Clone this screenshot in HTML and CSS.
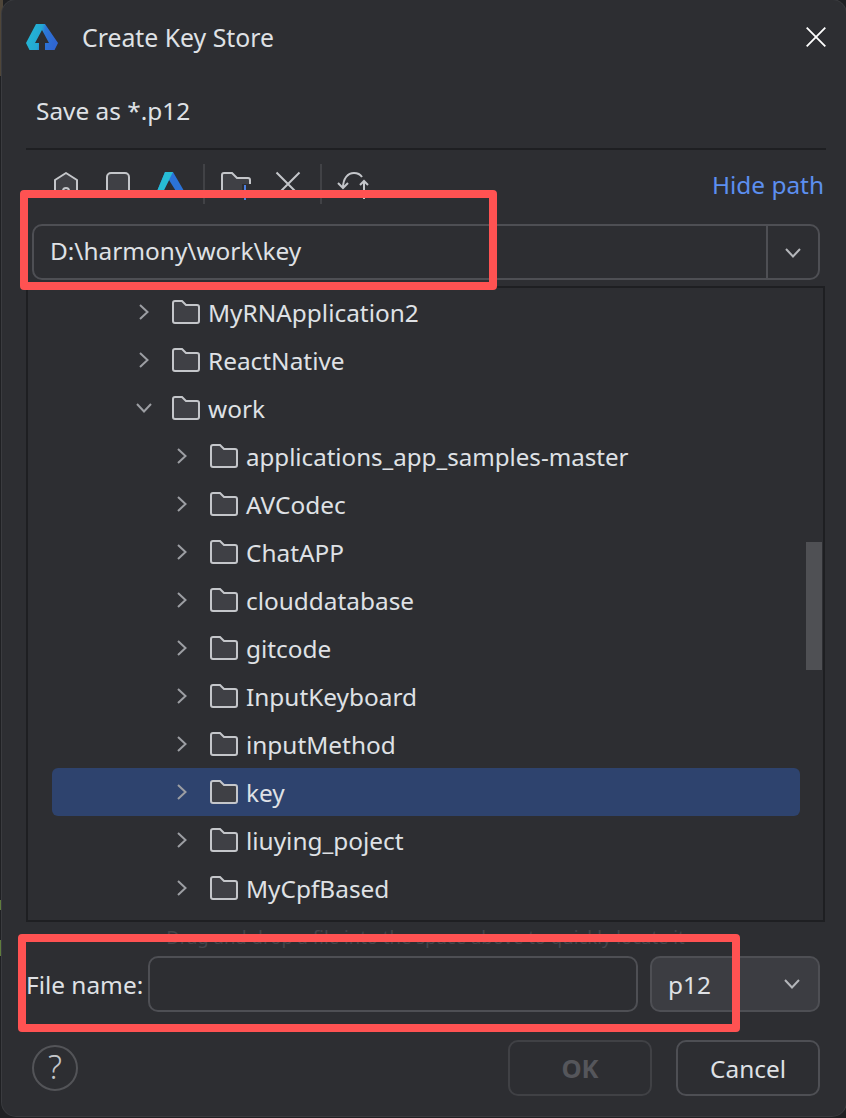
FILE: index.html
```html
<!DOCTYPE html>
<html lang="en">
<head>
<meta charset="utf-8">
<title>Create Key Store</title>
<link rel="stylesheet" href="styles.css">
</head>
<body>
<svg class="defs" width="0" height="0" aria-hidden="true">
  <defs>
    <linearGradient id="lg1" x1="0" y1="0" x2="1" y2="0.2"><stop offset="0" stop-color="#24b9d4"/><stop offset="0.5" stop-color="#23a8d3"/><stop offset="0.62" stop-color="#2c78d8"/><stop offset="1" stop-color="#2f66d2"/></linearGradient>
    <symbol id="i-right" viewBox="0 0 10 16"><path d="M1 1l7.500 7L1 15"/></symbol>
    <symbol id="i-down" viewBox="0 0 16 10"><path d="M1 1l7 7.500L15 1"/></symbol>
    <symbol id="i-folder" viewBox="0 0 28 24"><path d="M1 3a2 2 0 0 1 2-2h7l4 4h11a2 2 0 0 1 2 2v14a2 2 0 0 1-2 2H3a2 2 0 0 1-2-2z"/></symbol>
  </defs>
</svg>
<main class="dialog">
  <header class="titlebar">
    <svg class="logo" viewBox="0 0 32 26"><path fill-rule="evenodd" d="M10 0h9l13 19-3.500 7H19v-7h4L16 6 9 19h4v7H3.500L0 19z" fill="url(#lg1)"/></svg>
    <span class="title">Create Key Store</span>
    <svg class="close" viewBox="0 0 20 20"><path d="M.7.7l18.600 18.600M19.300.7L.7 19.300" stroke="#fff" stroke-width="1.800" fill="none"/></svg>
  </header>
  <p class="subtitle">Save as *.p12</p>
  <div class="divider"></div>
  <div class="toolbar">
    <div class="tools">
      <svg class="tool home" viewBox="0 0 28 28"><path d="M14 2l11 7v15H3V9z" fill="#3f4045" stroke="#c4c6ca" stroke-width="2" stroke-linejoin="round"/><circle cx="14" cy="20" r="3" fill="none" stroke="#c4c6ca" stroke-width="2"/></svg>
      <svg class="tool square" viewBox="0 0 28 28"><rect x="3" y="2" width="22" height="22" rx="4" fill="#3f4045" stroke="#c4c6ca" stroke-width="2"/></svg>
      <svg class="tool brand" viewBox="0 0 32 28"><path d="M10 1h8l14 24H24L14 9 6 25H0z" fill="#2b73d8"/><path d="M10 1h8L6 25H0z" fill="#27bcd4"/></svg>
      <span class="sep"></span>
      <svg class="tool folder-add" viewBox="0 0 30 40"><path d="M1 4a2 2 0 0 1 2-2h8l5 5h11a2 2 0 0 1 2 2v15H1z" fill="#3f4045" stroke="#c4c6ca" stroke-width="2"/><rect x="21" y="13" width="9" height="14" fill="#2d2e32"/><rect x="23" y="14" width="2" height="15" fill="#4c7fe0"/></svg>
      <svg class="tool cross" viewBox="0 0 26 26"><path d="M1.500 1.500l23 23M24.500 1.500l-23 23" stroke="#c4c6ca" stroke-width="2" fill="none"/></svg>
      <span class="sep"></span>
      <svg class="tool refresh" viewBox="0 0 34 28"><path d="M6 17C6 7 11 2 17 2c4 0 6 1 8 4M27 28V10M23 14l4-4 4 4M1 12l5 5 5-5" stroke="#c4c6ca" stroke-width="2" fill="none"/></svg>
    </div>
    <a class="hide-path">Hide path</a>
  </div>
  <div class="path-combo">
    <span class="path-value">D:\harmony\work\key</span>
    <span class="path-arrow"><svg class="chev"><use href="#i-down"/></svg></span>
  </div>
  <div class="tree">
    <div class="row d1"><svg class="arrow"><use href="#i-right"/></svg><svg class="folder"><use href="#i-folder"/></svg><span>MyRNApplication2</span></div>
    <div class="row d1"><svg class="arrow"><use href="#i-right"/></svg><svg class="folder"><use href="#i-folder"/></svg><span>ReactNative</span></div>
    <div class="row d1"><svg class="arrow open"><use href="#i-down"/></svg><svg class="folder"><use href="#i-folder"/></svg><span>work</span></div>
    <div class="row d2"><svg class="arrow"><use href="#i-right"/></svg><svg class="folder"><use href="#i-folder"/></svg><span class="long">applications_app_samples-master</span></div>
    <div class="row d2"><svg class="arrow"><use href="#i-right"/></svg><svg class="folder"><use href="#i-folder"/></svg><span>AVCodec</span></div>
    <div class="row d2"><svg class="arrow"><use href="#i-right"/></svg><svg class="folder"><use href="#i-folder"/></svg><span>ChatAPP</span></div>
    <div class="row d2"><svg class="arrow"><use href="#i-right"/></svg><svg class="folder"><use href="#i-folder"/></svg><span>clouddatabase</span></div>
    <div class="row d2"><svg class="arrow"><use href="#i-right"/></svg><svg class="folder"><use href="#i-folder"/></svg><span>gitcode</span></div>
    <div class="row d2"><svg class="arrow"><use href="#i-right"/></svg><svg class="folder"><use href="#i-folder"/></svg><span>InputKeyboard</span></div>
    <div class="row d2"><svg class="arrow"><use href="#i-right"/></svg><svg class="folder"><use href="#i-folder"/></svg><span>inputMethod</span></div>
    <div class="row d2 selected"><svg class="arrow"><use href="#i-right"/></svg><svg class="folder"><use href="#i-folder"/></svg><span>key</span></div>
    <div class="row d2"><svg class="arrow"><use href="#i-right"/></svg><svg class="folder"><use href="#i-folder"/></svg><span>liuying_poject</span></div>
    <div class="row d2"><svg class="arrow"><use href="#i-right"/></svg><svg class="folder"><use href="#i-folder"/></svg><span>MyCpfBased</span></div>
    <div class="thumb"></div>
  </div>
  <p class="hint">Drag and drop a file into the space above to quickly locate it</p>
  <div class="file-row">
    <span class="file-label">File name:</span>
    <span class="file-input"></span>
    <span class="file-type">p12<svg class="chev"><use href="#i-down"/></svg></span>
  </div>
  <footer class="actions">
    <span class="help">?</span>
    <span class="btn disabled">OK</span>
    <span class="btn">Cancel</span>
  </footer>
</main>
<div class="mark mark-path"></div>
<div class="mark mark-file"></div>
</body>
</html>
```
FILE: styles.css
```css
html, body { margin: 0; padding: 0; height: 100%; }
body {
  position: relative;
  width: 846px;
  height: 1118px;
  overflow: hidden;
  background:
    linear-gradient(#4f4639, #4f4639) left top / 3px 76px no-repeat,
    linear-gradient(#5f7c3c, #5f7c3c) left 900px / 2px 10px no-repeat,
    linear-gradient(#5f7c3c, #5f7c3c) left 940px / 2px 16px no-repeat,
    #1f2023;
  font-family: "Noto Sans", "Open Sans", sans-serif;
  font-size: 24.4px;
  color: #dfe1e5;
}
.defs { position: absolute; }
.dialog {
  box-sizing: border-box;
  width: 844px;
  height: 1116px;
  margin-left: 2px;
  padding: 0 21px 0 24px;
  background: #2d2e32;
  border-radius: 14px;
  box-shadow: 0 0 0 1px #3a3b3f;
  display: flex;
  flex-direction: column;
}
.titlebar { display: flex; align-items: center; height: 74px; flex: none; }
.logo { width: 32px; height: 26px; margin-right: 24px; flex: none; }
.title { flex: 1; font-size: 24.8px; }
.close { width: 20px; height: 20px; margin-right: -1px; }
.subtitle { margin: 0; height: 74px; line-height: 74px; padding-left: 10px; flex: none; }
.divider { height: 2px; margin-right: -1px; background: #1e1f22; flex: none; }
.toolbar { height: 74px; flex: none; display: flex; justify-content: space-between; }
.tools { display: flex; align-items: flex-start; height: 53px; padding: 14px 0 0 26px; box-sizing: border-box; }
.tool { flex: none; margin-top: 7px; }
.home { width: 28px; height: 28px; margin-right: 24px; }
.square { width: 28px; height: 28px; margin-right: 23px; }
.brand { width: 32px; height: 28px; margin-right: 16px; }
.folder-add { width: 30px; height: 40px; margin-left: 16px; margin-right: 24px; }
.cross { width: 26px; height: 26px; margin-right: 19px; }
.refresh { width: 34px; height: 28px; margin-left: 15px; }
.sep { width: 2px; height: 40px; background: #414246; flex: none; }
.hide-path { color: #5c8ff0; margin-top: 19px; margin-right: 1px; line-height: 32px; }
.path-combo {
  box-sizing: border-box;
  height: 56px;
  margin: 0 5px 6px 6px;
  border: 2px solid #4e4f54;
  border-radius: 10px;
  display: flex;
  align-items: center;
  flex: none;
}
.path-value { flex: 1; padding: 0 0 4px 16px; }
.path-arrow { width: 52px; height: 100%; border-left: 2px solid #4e4f54; display: flex; align-items: center; justify-content: center; padding-top: 2px; box-sizing: border-box; }
.chev { width: 16px; height: 10px; flex: none; fill: none; stroke: #b4b6ba; stroke-width: 2; }
.tree {
  box-sizing: border-box;
  position: relative;
  height: 636px;
  border: 2px solid #1e1f22;
  overflow: hidden;
  flex: none;
}
.row {
  height: 48px;
  margin: 0 23px 0 24px;
  display: flex;
  align-items: center;
  border-radius: 6px;
}
.row.d1 { padding-left: 87px; }
.row.d2 { padding-left: 125px; }
.arrow { width: 10px; height: 16px; fill: none; stroke: #9c9ea3; stroke-width: 2; margin-right: 23px; flex: none; }
.arrow.open { width: 16px; height: 10px; margin-left: -3px; margin-right: 20px; }
.folder { width: 28px; height: 24px; fill: #3f4045; stroke: #c4c6ca; stroke-width: 2; margin-right: 8px; flex: none; }
.long { font-size: 24.1px; }
.row.selected { background: #2e436e; }
.thumb { position: absolute; right: 1px; top: 254px; width: 16px; height: 128px; background: #4f5054; }
.hint { margin: 0; height: 34px; line-height: 30px; text-align: center; font-size: 18.5px; color: #44454a; flex: none; }
.file-row { display: flex; align-items: center; height: 56px; flex: none; }
.file-label { width: 122px; white-space: nowrap; }
.file-input { box-sizing: border-box; width: 490px; height: 56px; border: 2px solid #4e4f54; border-radius: 10px; margin-right: 12px; }
.file-type { box-sizing: border-box; width: 170px; height: 56px; border: 2px solid #4e4f54; border-radius: 10px; background: #3c3d42; display: flex; align-items: center; justify-content: space-between; padding: 0 18px 0 16px; }
.actions { display: flex; align-items: center; margin-top: 28px; padding-left: 6px; padding-right: 5px; }
.help { box-sizing: border-box; width: 46px; height: 46px; border: 2px solid #535458; border-radius: 50%; text-align: center; line-height: 40px; font-size: 33px; font-weight: 300; color: #c4c6ca; margin-right: auto; }
.btn { box-sizing: border-box; width: 144px; height: 56px; border: 2px solid #4e4f54; border-radius: 10px; text-align: center; line-height: 54px; margin-left: 24px; }
.btn.disabled { color: #55565b; font-weight: 700; font-size: 25.5px; line-height: 52px; border-color: #404145; }
.mark { position: absolute; box-sizing: border-box; border: 8px solid #ff5252; border-radius: 4px; pointer-events: none; }
.mark-path { left: 20px; top: 190px; width: 477px; height: 100px; }
.mark-file { left: 18px; top: 934px; width: 722px; height: 98px; }
```
